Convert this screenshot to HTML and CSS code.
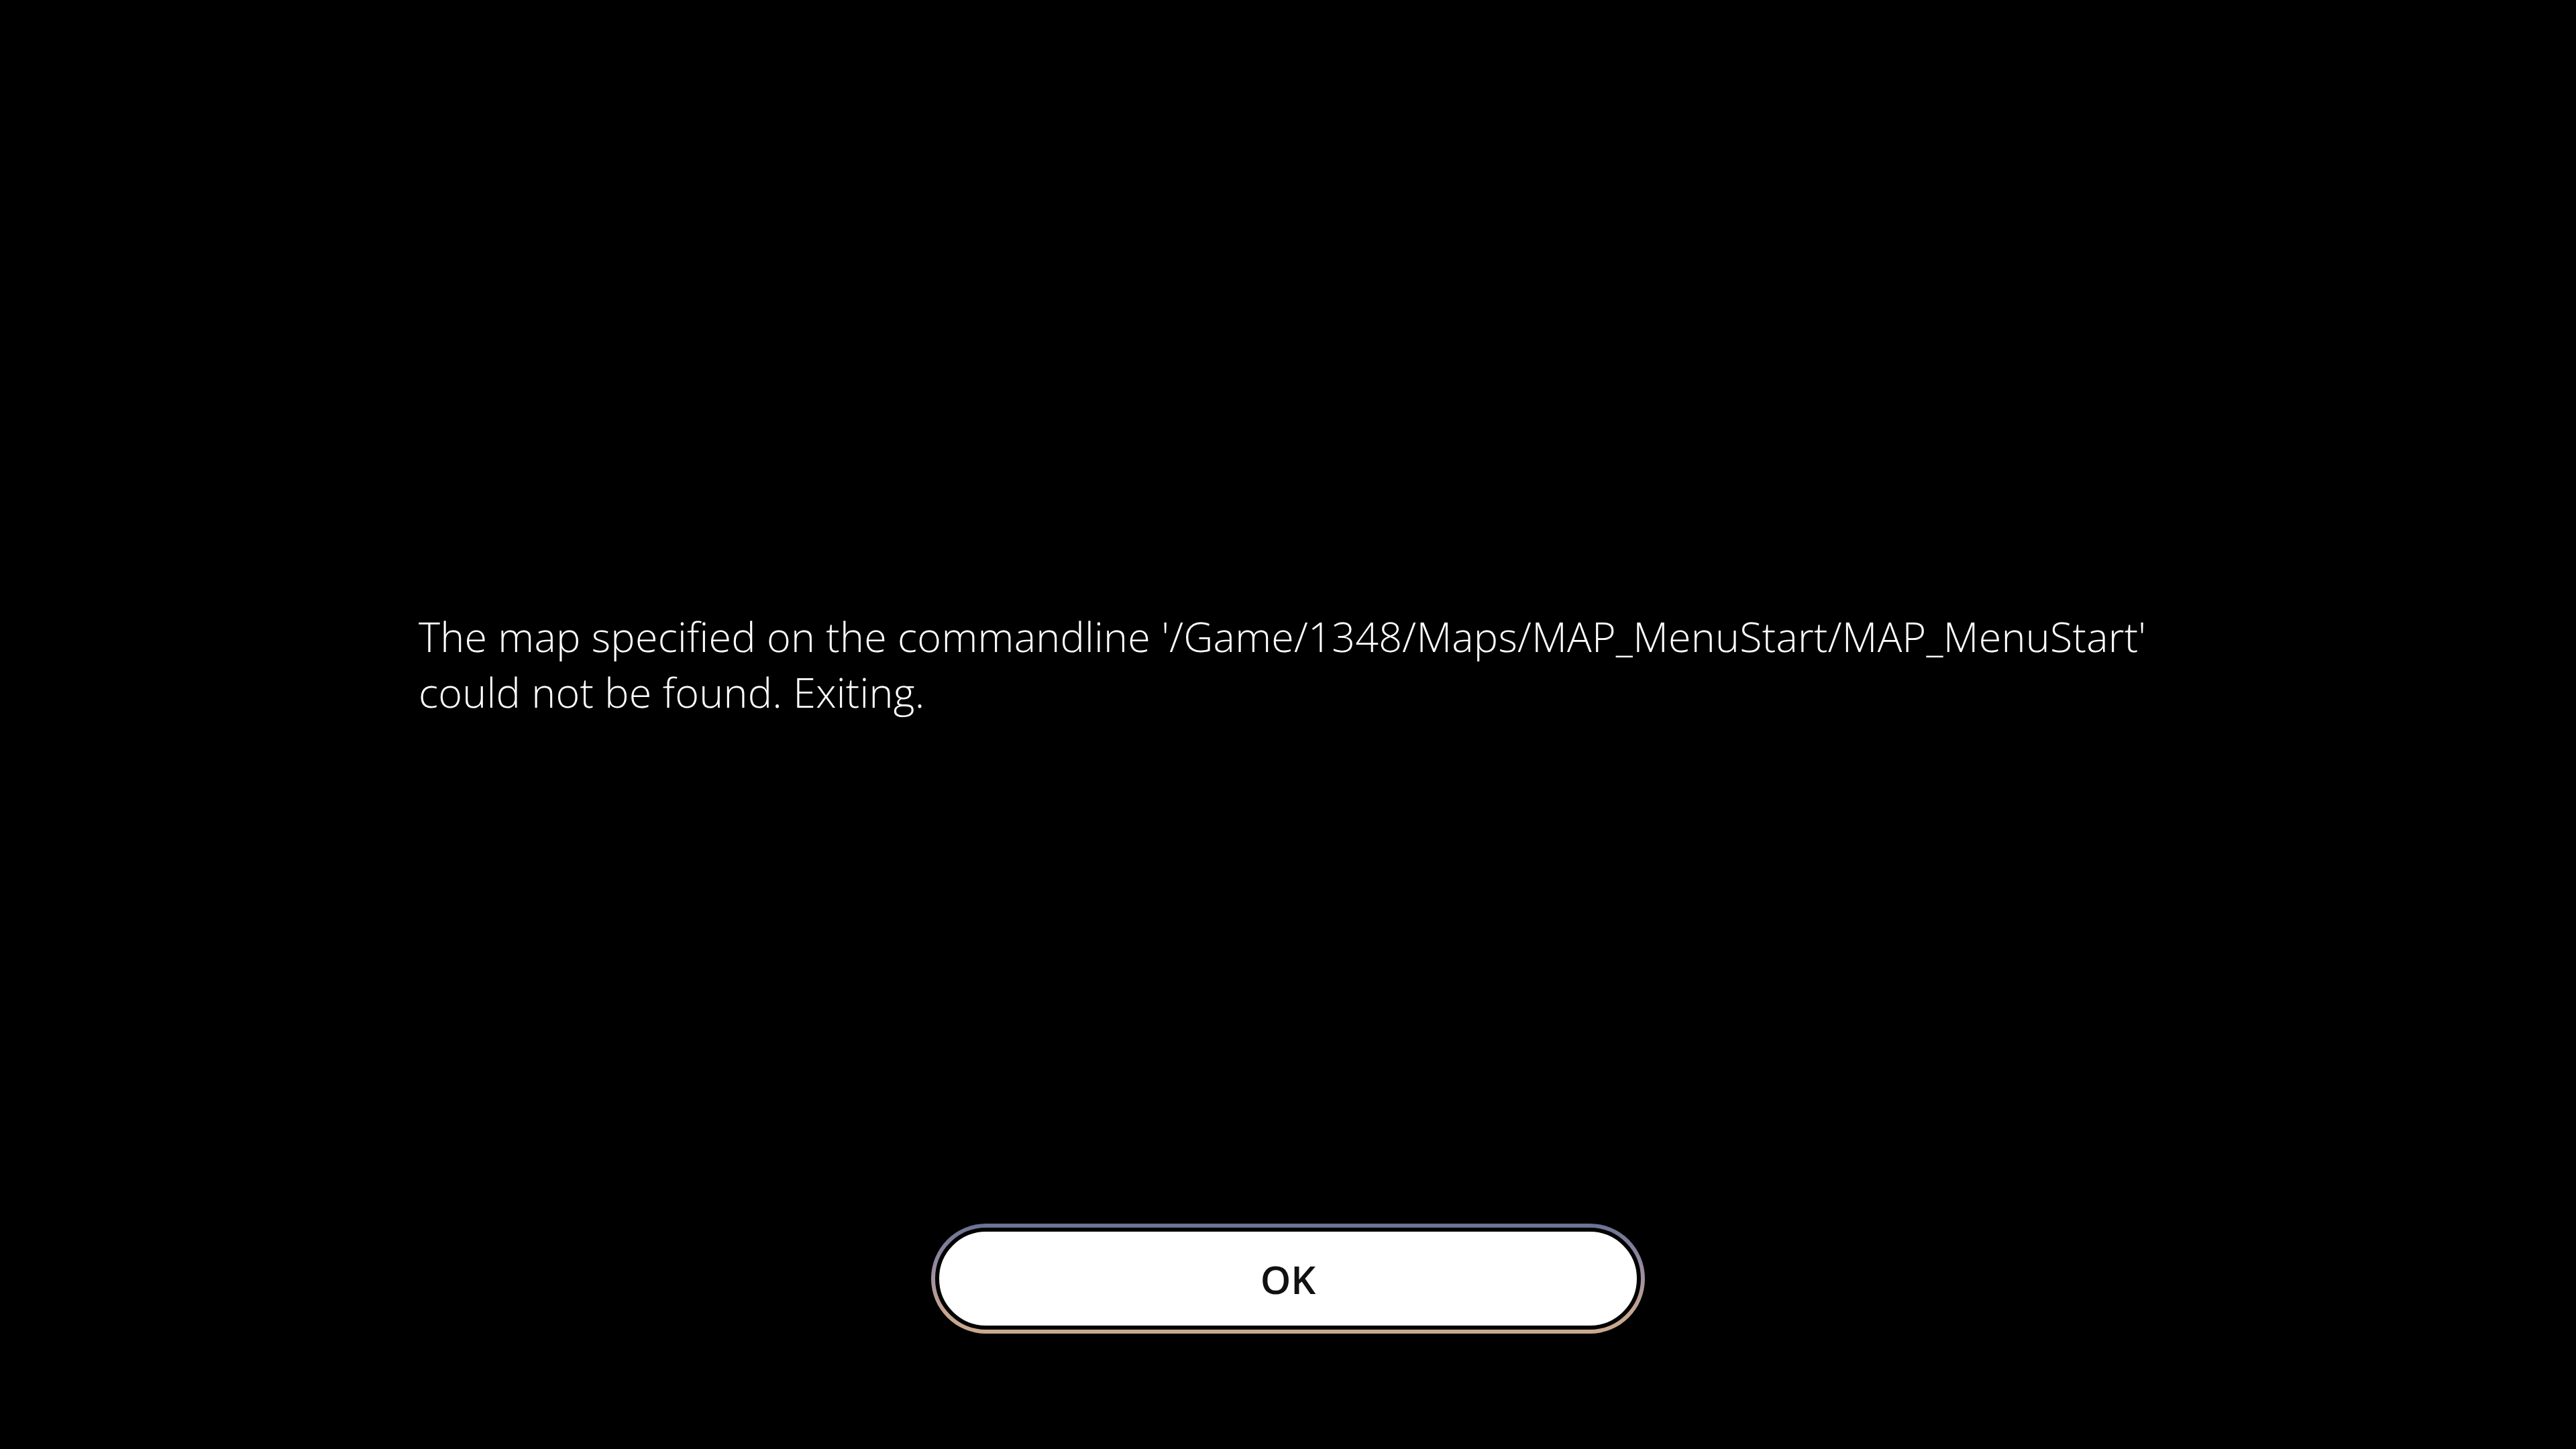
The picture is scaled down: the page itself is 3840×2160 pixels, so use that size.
FILE: index.html
```html
<!DOCTYPE html>
<html lang="en">
<head>
    <meta charset="UTF-8">
    <meta name="viewport" content="width=device-width, initial-scale=1.0">
    <title>Error</title>
    <link rel="stylesheet" href="styles.css">
</head>
<body>
    <div class="screen">
        <div class="message">
            <p>The map specified on the commandline '/Game/1348/Maps/MAP_MenuStart/MAP_MenuStart' could not be found. Exiting.</p>
        </div>
        <div class="actions">
            <div class="btn-ring">
                <button class="btn-ok">OK</button>
            </div>
        </div>
    </div>
</body>
</html>
```

FILE: styles.css
```css
body {
    margin: 0;
    background-color: #000;
    font-family: "Open Sans", "Noto Sans", sans-serif;
}
.screen {
    height: 100vh;
    display: flex;
    flex-direction: column;
    align-items: center;
}
.message {
    width: 2592px;
    margin-top: 907px;
}
.message p {
    margin: 0;
    color: #fff;
    font-size: 61px;
    font-weight: 300;
    line-height: 83px;
    letter-spacing: 0.25px;
}
.actions {
    margin-top: auto;
    padding-bottom: 172px;
}
.btn-ring {
    padding: 6px;
    border-radius: 999px;
    background: linear-gradient(to bottom, #6b7394 0%, #9e8da2 45%, #c6a690 80%, #c9aa90 100%);
}
.btn-ok {
    display: block;
    width: 1052px;
    height: 152px;
    border: 6px solid #000;
    border-radius: 999px;
    background-color: #fff;
    color: #111;
    font-family: "Open Sans", "Noto Sans", sans-serif;
    font-size: 58px;
    font-weight: 600;
    cursor: pointer;
}
```
